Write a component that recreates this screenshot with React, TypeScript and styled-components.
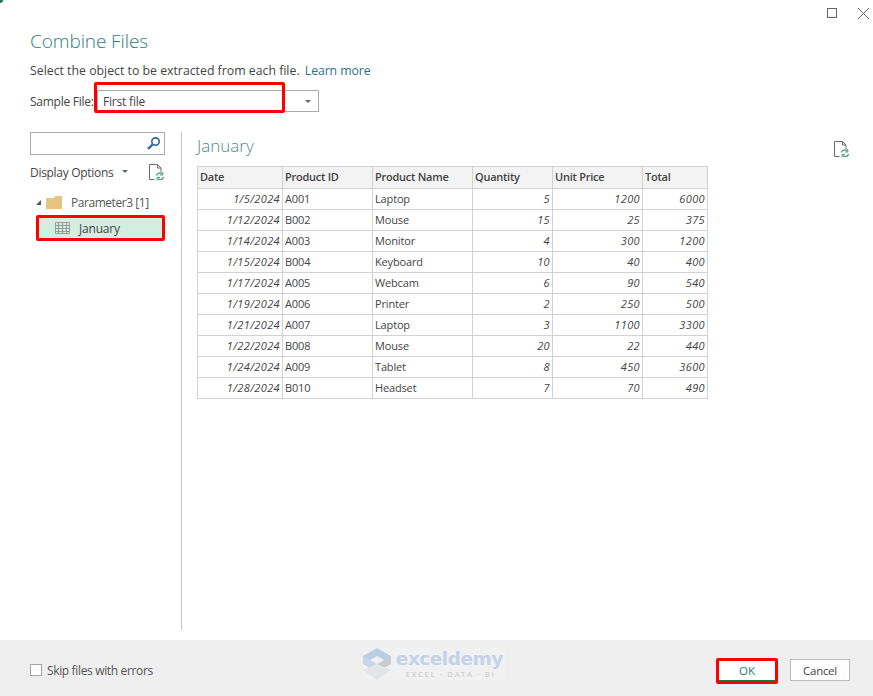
import React from "react";
import styled, { createGlobalStyle } from "styled-components";

const Global = createGlobalStyle`
  html, body { margin: 0; padding: 0; background: #fff; }
  body { font-family: "Open Sans", "Noto Sans", "Liberation Sans", sans-serif; color: #444; }
`;
const Dialog = styled.div`
  width: 873px; height: 696px; display: flex; flex-direction: column; overflow: hidden; position: relative; background: #fff;
`;
const Corner = styled.div`
  position: absolute; left: 0; top: 0; width: 3px; height: 3px; background: #1f7a4c; border-bottom-right-radius: 3px;
`;
const TitleBar = styled.div`
  height: 26px; display: flex; justify-content: flex-end; align-items: center; gap: 20px; padding: 0 2px 0 0; margin-right: 1px;
`;
const Main = styled.div`
  flex: 1; padding: 0 0 0 30px; display: flex; flex-direction: column; min-height: 0;
`;
const Title = styled.h1`
  margin: 2px 0 0; font-weight: 300; font-size: 19px; line-height: 26px; color: #2e8074; letter-spacing: -0.1px;
`;
const Sub = styled.div`
  margin-top: 8px; font-size: 12.3px; line-height: 18px; color: #444; white-space: nowrap;
`;
const Link = styled.span` color: #2f6f86; margin-left: 2px; letter-spacing: -0.1px; `;
const SampleRow = styled.div`
  margin-top: 10px; height: 22px; display: flex; align-items: center;
`;
const SampleLabel = styled.span` width: 67px; font-size: 12px; white-space: nowrap; letter-spacing: -0.25px; `;
const Select = styled.div`
  position: relative; width: 222px; height: 22px; box-sizing: border-box; border: 1px solid #ababab; display: flex; align-items: center; padding-left: 5px; font-size: 12px; justify-content: space-between; letter-spacing: -0.2px;
`;
const Caret = styled.span`
  width: 0; height: 0; border-left: 3px solid transparent; border-right: 3px solid transparent; border-top: 3px solid #666; margin-right: 7px;
`;
const RedOverlay = styled.div`
  position: absolute; left: -4px; top: -9px; width: 191px; height: 31px; box-sizing: border-box; border: 3px solid #f00; border-radius: 2px; pointer-events: none;
`;
const Body = styled.div`
  flex: 1; margin-top: 20px; display: flex; min-height: 0; margin-bottom: 10px;
`;
const Side = styled.div`
  width: 151px; flex: none; border-right: 1px solid #c6c6c6; margin-right: 15px;
`;
const SideInner = styled.div` width: 135px; `;
const Search = styled.div`
  height: 23px; box-sizing: border-box; border: 1px solid #ababab; display: flex; align-items: center; justify-content: flex-end; padding-right: 3px;
`;
const Options = styled.div`
  margin-top: 6px; height: 22px; display: flex; align-items: center; font-size: 12px; color: #444; letter-spacing: -0.3px; white-space: nowrap;
`;
const OptionCaret = styled(Caret)` margin: 0 0 2px 9px; `;
const OptionIcon = styled.span` margin-left: auto; display: flex; `;
const Tree = styled.div` margin-top: 9px; `;
const FolderRow = styled.div`
  height: 20px; margin-bottom: 3px; display: flex; align-items: center; font-size: 12px; color: #555; padding-left: 6px; letter-spacing: -0.45px;
`;
const Tri = styled.span`
  width: 0; height: 0; border-left: 5px solid transparent; border-bottom: 5px solid #555; margin-right: 5px;
`;
const FolderLabel = styled.span` margin-left: 9px; white-space: nowrap; `;
const SelectedRow = styled.div`
  margin-left: 6px; height: 26px; box-sizing: border-box; border: 3px solid #f00; border-radius: 2px; background: #d1eee0; display: flex; align-items: center; padding-left: 16px; font-size: 12px; color: #444; letter-spacing: -0.2px;
`;
const SelectedLabel = styled.span` margin-left: 9px; `;
const Preview = styled.div` flex: 1; display: flex; flex-direction: column; `;
const PreviewHead = styled.div`
  display: flex; justify-content: space-between; align-items: center; height: 34px; width: 653px;
`;
const PreviewTitle = styled.h2`
  margin: 0; align-self: flex-start; font-weight: 300; font-size: 17px; line-height: 28px; color: #4f8d80;
`;
const Table = styled.table`
  border-collapse: collapse; table-layout: fixed; width: 510px; font-size: 11px; color: #444; letter-spacing: -0.15px;
`;
const Th = styled.th`
  height: 22px; padding: 0 2px 2px; box-sizing: border-box; border: 1px solid #d2d2d2; background: #f3f3f3; font-weight: 600; text-align: left; font-size: 11px; white-space: nowrap; letter-spacing: -0.25px;
`;
const Td = styled.td<{ $num?: boolean }>`
  height: 21px; padding: 0 2px; box-sizing: border-box; border: 1px solid #d2d2d2; white-space: nowrap; line-height: 18px;
  text-align: ${(p) => (p.$num ? "right" : "left")};
  font-style: ${(p) => (p.$num ? "italic" : "normal")};
  letter-spacing: ${(p) => (p.$num ? "0.35px" : "-0.15px")};
`;
const Footer = styled.div`
  height: 56px; box-sizing: border-box; flex: none; background: #efefef; display: flex; align-items: center; padding: 4px 23px 0 30px;
`;
const Check = styled.span`
  width: 12px; height: 12px; box-sizing: border-box; border: 1px solid #a5a5a5; background: #fff; flex: none;
`;
const CheckLabel = styled.span` margin-left: 5px; font-size: 12px; color: #555; letter-spacing: -0.35px; white-space: nowrap; `;
const Watermark = styled.div`
  margin-left: 210px; margin-top: -12px; display: flex; align-items: center; width: 142px; gap: 5px; background: #f1f1f1; flex: none;
`;
const MarkLogo = styled.svg` flex: none; `;
const MarkText = styled.div` display: flex; flex-direction: column; gap: 1px; `;
const MarkName = styled.span`
  font-size: 18.5px; line-height: 20px; font-weight: 700; color: #c5d3ea; font-family: "DejaVu Sans", sans-serif; letter-spacing: -0.5px;
`;
const MarkSub = styled.span`
  font-size: 7.5px; line-height: 9px; color: #cfcfcf; letter-spacing: 1.7px; font-weight: 600; margin-left: 10px; white-space: nowrap;
`;
const Buttons = styled.div` margin-left: auto; display: flex; align-items: center; gap: 12px; `;
const OkButton = styled.div`
  position: relative; width: 62px; height: 26px; margin-top: 1px; box-sizing: border-box; border: 3px solid #f00; border-radius: 2px; background: #fff; font-size: 11.5px; color: #2e7d6f; display: flex; align-items: center; justify-content: center;
  &::after { content: ""; position: absolute; left: 0; right: 0; bottom: 0; height: 1px; background: #217346; }
`;
const CancelButton = styled.div`
  width: 60px; height: 22px; box-sizing: border-box; border: 1px solid #bdbdbd; background: #fff; font-size: 11.5px; letter-spacing: -0.3px; color: #444; display: flex; align-items: center; justify-content: center;
`;

const columns = [
  { name: "Date", w: 85 },
  { name: "Product ID", w: 90 },
  { name: "Product Name", w: 100 },
  { name: "Quantity", w: 80 },
  { name: "Unit Price", w: 90 },
  { name: "Total", w: 65 },
];
const rows: [string, string, string, number, number, number][] = [
  ["1/5/2024", "A001", "Laptop", 5, 1200, 6000],
  ["1/12/2024", "B002", "Mouse", 15, 25, 375],
  ["1/14/2024", "A003", "Monitor", 4, 300, 1200],
  ["1/15/2024", "B004", "Keyboard", 10, 40, 400],
  ["1/17/2024", "A005", "Webcam", 6, 90, 540],
  ["1/19/2024", "A006", "Printer", 2, 250, 500],
  ["1/21/2024", "A007", "Laptop", 3, 1100, 3300],
  ["1/22/2024", "B008", "Mouse", 20, 22, 440],
  ["1/24/2024", "A009", "Tablet", 8, 450, 3600],
  ["1/28/2024", "B010", "Headset", 7, 70, 490],
];

const RefreshDoc = () => (
  <svg width="16" height="17" viewBox="0 0 16 17" fill="none">
    <path d="M5.5 15.5H.5V.5H8.5L12 4V8M8.5.5V4H12" stroke="#6a6a6a" strokeWidth="1" />
    <path d="M7.5 11.5A3.2 3.2 0 0 1 13 10M14.5 13A3.2 3.2 0 0 1 9 14.5" stroke="#4f9a78" strokeWidth="1.3" />
    <path d="M13.8 8v3h-3M8 16.4v-3h3" stroke="#4f9a78" strokeWidth="1" />
  </svg>
);

export default function App() {
  return (
    <Dialog>
      <Global />
      <Corner />
      <TitleBar>
        <svg width="10" height="10" viewBox="0 0 10 10" fill="none"><rect x=".5" y=".5" width="9" height="9" stroke="#666" /></svg>
        <svg width="13" height="13" viewBox="0 0 13 13" fill="none"><path d="M1 1l11 11M12 1L1 12" stroke="#666" strokeWidth="1" /></svg>
      </TitleBar>
      <Main>
        <Title>Combine Files</Title>
        <Sub>Select the object to be extracted from each file. <Link>Learn more</Link></Sub>
        <SampleRow>
          <SampleLabel>Sample File:</SampleLabel>
          <Select>
            First file
            <Caret />
            <RedOverlay />
          </Select>
        </SampleRow>
        <Body>
          <Side>
            <SideInner>
              <Search>
                <svg width="15" height="15" viewBox="0 0 15 15" fill="none">
                  <circle cx="9.5" cy="5.5" r="3.7" stroke="#2c6f9e" strokeWidth="1.7" />
                  <path d="M6.7 8.3L2 13" stroke="#2c6f9e" strokeWidth="2.4" />
                </svg>
              </Search>
              <Options>
                Display Options
                <OptionCaret />
                <OptionIcon><RefreshDoc /></OptionIcon>
              </Options>
              <Tree>
                <FolderRow>
                  <Tri />
                  <svg width="16" height="13" viewBox="0 0 16 13"><path d="M0 2h8l1-2h7v13H0z" fill="#e6c583" /></svg>
                  <FolderLabel>Parameter3 [1]</FolderLabel>
                </FolderRow>
                <SelectedRow>
                  <svg width="15" height="13" viewBox="0 0 15 13" fill="none" stroke="#8a8a8a" strokeWidth=".8">
                    <path d="M.5.5h14v11H.5zM.5 3.5h14M.5 6.5h14M.5 9.5h14M3.5.5v11M7.5.5v11M11.5.5v11" />
                  </svg>
                  <SelectedLabel>January</SelectedLabel>
                </SelectedRow>
              </Tree>
            </SideInner>
          </Side>
          <Preview>
            <PreviewHead>
              <PreviewTitle>January</PreviewTitle>
              <RefreshDoc />
            </PreviewHead>
            <Table>
              <colgroup>
                {columns.map((c) => <col key={c.name} style={{ width: c.w }} />)}
              </colgroup>
              <thead>
                <tr>{columns.map((c) => <Th key={c.name}>{c.name}</Th>)}</tr>
              </thead>
              <tbody>
                {rows.map((r) => (
                  <tr key={r[0]}>
                    <Td $num>{r[0]}</Td>
                    <Td>{r[1]}</Td>
                    <Td>{r[2]}</Td>
                    <Td $num>{r[3]}</Td>
                    <Td $num>{r[4]}</Td>
                    <Td $num>{r[5]}</Td>
                  </tr>
                ))}
              </tbody>
            </Table>
          </Preview>
        </Body>
      </Main>
      <Footer>
        <Check />
        <CheckLabel>Skip files with errors</CheckLabel>
        <Watermark>
          <MarkLogo width="28" height="32" viewBox="0 0 28 32">
            <path d="M14 0l14 8v8L14 8 0 16V8z" fill="#bccde8" />
            <path d="M0 8l14 8v8L0 16z" fill="#c6d5ec" />
            <path d="M28 8v8l-14 8v-8z" fill="#c9cdd3" />
            <path d="M0 22l14 10 14-10-14-6z" fill="#e2e6e8" />
          </MarkLogo>
          <MarkText>
            <MarkName>exceldemy</MarkName>
            <MarkSub>EXCEL · DATA · BI</MarkSub>
          </MarkText>
        </Watermark>
        <Buttons>
          <OkButton>OK</OkButton>
          <CancelButton>Cancel</CancelButton>
        </Buttons>
      </Footer>
    </Dialog>
  );
}
